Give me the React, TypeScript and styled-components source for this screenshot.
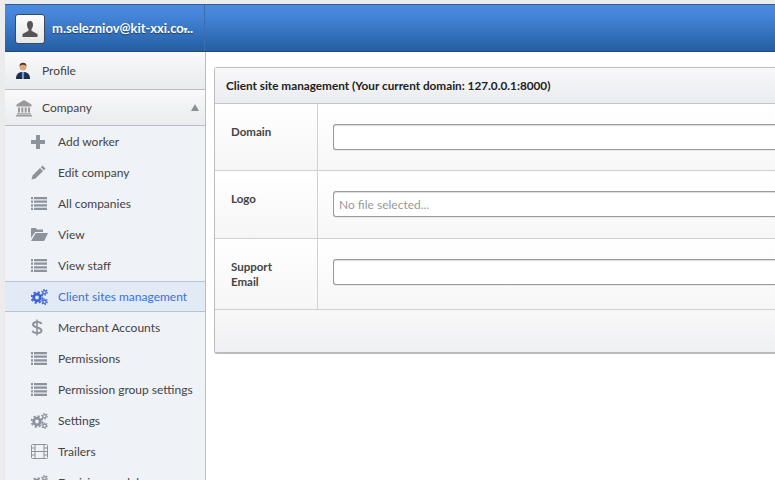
import styled, { createGlobalStyle } from 'styled-components'
import { ReactNode } from 'react'

const Global = createGlobalStyle`
  html, body {
    margin: 0;
    padding: 0;
    height: 100%;
    overflow: hidden;
    background: #fff;
  }
  body {
    font-family: Lato, 'Open Sans', sans-serif;
    font-size: 12px;
    color: #333;
  }
`
const Page = styled.div`
  width: 775px;
  height: 480px;
  box-sizing: border-box;
  padding: 4px 0 0 5px;
  background: #ececec;
  overflow: hidden;
`
const Header = styled.header`
  height: 48px;
  box-sizing: border-box;
  display: flex;
  border-top: 1px solid #2c5f9e;
  border-bottom: 1px solid #1d4a86;
  background: linear-gradient(to bottom, #4c8ae2 0%, #4484d8 25%, #2a66ad 85%, #255da0 100%);
`
const UserBlock = styled.div`
  width: 200px;
  box-sizing: border-box;
  padding: 9px 0 0 10px;
  display: flex;
  gap: 7px;
  border-right: 1px solid #3a6eb0;
  position: relative;
`
const Avatar = styled.div`
  width: 28px;
  height: 28px;
  flex-shrink: 0;
  border: 1px solid #3c4a5c;
  border-radius: 3px;
  background: linear-gradient(to bottom, #fdfdfd, #e6e6e6);
  display: flex;
  align-items: center;
  justify-content: center;
`
const UserName = styled.div`
  white-space: nowrap;
  color: #fff;
  font-weight: 700;
  font-size: 13px;
  line-height: 29px;
  text-shadow: 0 1px 1px rgba(0, 0, 0, 0.5);
`
const Caret = styled.span`
  position: absolute;
  left: 177px;
  top: 20px;
  color: #fff;
  font-size: 7px;
  line-height: 8px;
`
const Body = styled.div`
  display: flex;
  height: 428px;
  background: #fff;
`
const Sidebar = styled.nav`
  width: 201px;
  flex-shrink: 0;
  box-sizing: border-box;
  background: #eff2f6;
  border-right: 1px solid #b9bdc6;
  overflow: hidden;
`
const TopItem = styled.div<{ $h: number }>`
  height: ${(p) => p.$h}px;
  box-sizing: border-box;
  display: flex;
  align-items: center;
  padding: 0 6px 0 10px;
  color: #444;
  font-size: 12px;
  border-bottom: 1px solid #bbbdc2;
  background: linear-gradient(to bottom, #f9f9fa, #e9ebee);
`
const TopIcon = styled.span`
  width: 27px;
  display: flex;
  align-items: center;
`
const Arrow = styled.span`
  margin-left: auto;
  width: 0;
  height: 0;
  border-left: 4px solid transparent;
  border-right: 4px solid transparent;
  border-bottom: 7px solid #8a8f96;
`
const SubList = styled.div`
  display: flex;
  flex-direction: column;
`
const SubItem = styled.div<{ $active?: boolean }>`
  height: 31px;
  flex-shrink: 0;
  box-sizing: border-box;
  display: flex;
  align-items: center;
  padding-left: 26px;
  white-space: nowrap;
  font-size: 12px;
  color: ${(p) => (p.$active ? '#3f6fd8' : '#444')};
  background: ${(p) => (p.$active ? '#e1eaf5' : 'transparent')};
  border-top: 1px solid ${(p) => (p.$active ? '#b8c3d2' : 'transparent')};
  border-bottom: 1px solid ${(p) => (p.$active ? '#b8c3d2' : 'transparent')};
`
const SubIcon = styled.span`
  width: 27px;
  display: flex;
  align-items: center;
  flex-shrink: 0;
`
const Main = styled.main`
  flex: 1;
  min-width: 0;
  padding: 15px 0 0 8px;
  background: #fff;
`
const Panel = styled.section`
  width: 600px;
  border: 1px solid #bcbcbc;
  border-right: 0;
  border-bottom: 2px solid #bcbcbc;
  border-radius: 3px 0 0 3px;
`
const PanelTitle = styled.div`
  height: 36px;
  box-sizing: border-box;
  padding-left: 11px;
  display: flex;
  align-items: center;
  font-weight: 700;
  font-size: 11.75px;
  color: #222;
  border-bottom: 1px solid #c4c6cb;
  background: linear-gradient(to bottom, #f8f8f9, #eaecf0);
`
const Row = styled.div<{ $h: number }>`
  height: ${(p) => p.$h}px;
  box-sizing: border-box;
  display: flex;
  border-bottom: 1px solid #cfcfcf;
`
const Label = styled.div`
  width: 103px;
  flex-shrink: 0;
  box-sizing: border-box;
  padding: 20px 0 0 16px;
  font-weight: 700;
  font-size: 11.5px;
  line-height: 15px;
  color: #444;
  border-right: 1px solid #d2d2d2;
  background: linear-gradient(to bottom, #ffffff, #f6f6f6);
`
const Field = styled.div`
  flex: 1;
  padding: 20px 0 0 15px;
  background: linear-gradient(to bottom, #ffffff, #f7f7f7);
`
const Input = styled.div`
  height: 26px;
  box-sizing: border-box;
  border: 1px solid #9a9a9a;
  border-right: 0;
  border-radius: 3px 0 0 3px;
  background: #fff;
  box-shadow: inset 0 1px 1px rgba(0, 0, 0, 0.14), 0 1px 0 rgba(0, 0, 0, 0.06);
  padding-left: 5px;
  line-height: 25px;
  font-size: 12px;
  color: #999;
`
const PanelFooter = styled.div`
  height: 42px;
  background: linear-gradient(to bottom, #f8f8f8, #eff0f3);
`

const G = '#8d939c'

const Person = () => (
  <svg width="18" height="20" viewBox="0 0 18 20">
    <path d="M9 2C6.800 2 6 3.700 6 5.800c0 1.900.7 3.500 1.500 4.300v1.700L1.500 15v3h15v-3l-6-3.200v-1.700c.8-.8 1.500-2.400 1.500-4.300C12 3.700 11.200 2 9 2z" fill="#555" />
  </svg>
)
const Manager = () => (
  <svg width="16" height="18" viewBox="0 0 16 18">
    <circle cx="8" cy="5" r="3.400" fill="#d9a67e" />
    <path d="M4.500 4.500C4.500 1.800 6 .8 8 .8s3.500 1 3.500 3.700c-.8-1.300-2-1.700-3.500-1.700s-2.700.4-3.500 1.700z" fill="#4a2e1c" />
    <path d="M1 17c0-4 1.500-6 5-7h4c3.500 1 5 3 5 7z" fill="#1f2d4d" />
    <path d="M6.800 10h2.400L9 17H7z" fill="#6f9fc8" />
  </svg>
)
const Bank = () => (
  <svg width="18" height="18" viewBox="0 0 18 18" fill="#9a9a9a">
    <path d="M9 1 1.500 5.500v2h15v-2z" />
    <path d="M3 8.500h2v5H3zM6.300 8.500h2v5h-2zM9.700 8.500h2v5h-2zM13 8.500h2v5h-2z" />
    <path d="M2 14.200h14v1.300H2zM1 16h16v1.500H1z" />
  </svg>
)
const Plus = () => (
  <svg width="14" height="14" viewBox="0 0 14 14" fill={G}>
    <path d="M5 0h4v5h5v4H9v5H5V9H0V5h5z" />
  </svg>
)
const Pencil = () => (
  <svg width="15" height="15" viewBox="0 0 15 15" fill={G}>
    <path d="M11.500 .5 14.500 3.500 12.800 5.200 9.800 2.200zM9 3 12 6 4.500 13.500.5 14.500 1.500 10.500z" />
  </svg>
)
const ListIcon = () => (
  <svg width="16" height="13" viewBox="0 0 16 13" fill={G}>
    <path d="M0 0h2v2.200H0zM3 0h13v2.200H3zM0 3.600h2v2.200H0zM3 3.600h13v2.200H3zM0 7.200h2v2.200H0zM3 7.200h13v2.200H3zM0 10.800h2V13H0zM3 10.800h13V13H3z" />
  </svg>
)
const Folder = () => (
  <svg width="17" height="13" viewBox="0 0 17 13" fill={G}>
    <path d="M0 1.200C0 .5.500 0 1.200 0h3.600l1.200 1.500h5c.7 0 1 .4 1 1V4H4.200L0 10z" />
    <path d="M4.800 5H17l-3.800 8H0z" />
  </svg>
)
const Gears = ({ color = G }: { color?: string }) => (
  <svg width="17" height="16" viewBox="0 0 17 16" fill="none" stroke={color}>
    <circle cx="6" cy="8.500" r="3.300" strokeWidth="2.800" />
    <circle cx="6" cy="8.500" r="5.400" strokeWidth="1.800" strokeDasharray="2.200 2.040" />
    <circle cx="13.500" cy="3.300" r="1.700" strokeWidth="1.300" />
    <circle cx="13.500" cy="3.300" r="2.800" strokeWidth="1.200" strokeDasharray="1.300 1.630" />
    <circle cx="13.500" cy="12.700" r="1.700" strokeWidth="1.300" />
    <circle cx="13.500" cy="12.700" r="2.800" strokeWidth="1.200" strokeDasharray="1.300 1.630" />
  </svg>
)
const Dollar = () => (
  <svg width="12" height="17" viewBox="0 0 12 17" fill="none" stroke={G} strokeWidth="2">
    <path d="M10.500 5C10 3.500 8.500 3 6 3 3.500 3 2 4 2 5.500S3.500 7.800 6 8.500s4.500 1.200 4.500 3S8.500 14 6 14 2 13.300 1.500 11.800" />
    <path d="M6 .5v16" strokeWidth="1.600" />
  </svg>
)
const Film = () => (
  <svg width="17" height="15" viewBox="0 0 17 15" fill="none" stroke={G}>
    <rect x=".5" y=".5" width="16" height="14" rx="1" />
    <path d="M4 .5v14M13 .5v14M.5 4h3.500M.5 7.500h3.500M.5 11h3.500M13 4h3.500M13 7.500h3.500M13 11h3.500M4 7.500h9" />
  </svg>
)

const items: { label: string; icon: ReactNode; active?: boolean }[] = [
  { label: 'Add worker', icon: <Plus /> },
  { label: 'Edit company', icon: <Pencil /> },
  { label: 'All companies', icon: <ListIcon /> },
  { label: 'View', icon: <Folder /> },
  { label: 'View staff', icon: <ListIcon /> },
  { label: 'Client sites management', icon: <Gears color="#3f62d6" />, active: true },
  { label: 'Merchant Accounts', icon: <Dollar /> },
  { label: 'Permissions', icon: <ListIcon /> },
  { label: 'Permission group settings', icon: <ListIcon /> },
  { label: 'Settings', icon: <Gears /> },
  { label: 'Trailers', icon: <Film /> },
  { label: 'Decision models', icon: <Gears /> },
]

export default function App() {
  return (
    <Page>
      <Global />
      <Header>
        <UserBlock>
          <Avatar>
            <Person />
          </Avatar>
          <UserName>m.selezniov@kit-xxi.co...</UserName>
          <Caret>▼</Caret>
        </UserBlock>
      </Header>
      <Body>
        <Sidebar>
          <TopItem $h={38}>
            <TopIcon>
              <Manager />
            </TopIcon>
            Profile
          </TopItem>
          <TopItem $h={36}>
            <TopIcon>
              <Bank />
            </TopIcon>
            Company
            <Arrow />
          </TopItem>
          <SubList>
            {items.map((item) => (
              <SubItem key={item.label} $active={item.active}>
                <SubIcon>{item.icon}</SubIcon>
                {item.label}
              </SubItem>
            ))}
          </SubList>
        </Sidebar>
        <Main>
          <Panel>
            <PanelTitle>Client site management (Your current domain: 127.0.0.1:8000)</PanelTitle>
            <Row $h={67}>
              <Label>Domain</Label>
              <Field>
                <Input />
              </Field>
            </Row>
            <Row $h={68}>
              <Label>Logo</Label>
              <Field>
                <Input>No file selected...</Input>
              </Field>
            </Row>
            <Row $h={71}>
              <Label>
                Support
                <br />
                Email
              </Label>
              <Field>
                <Input />
              </Field>
            </Row>
            <PanelFooter />
          </Panel>
        </Main>
      </Body>
    </Page>
  )
}
